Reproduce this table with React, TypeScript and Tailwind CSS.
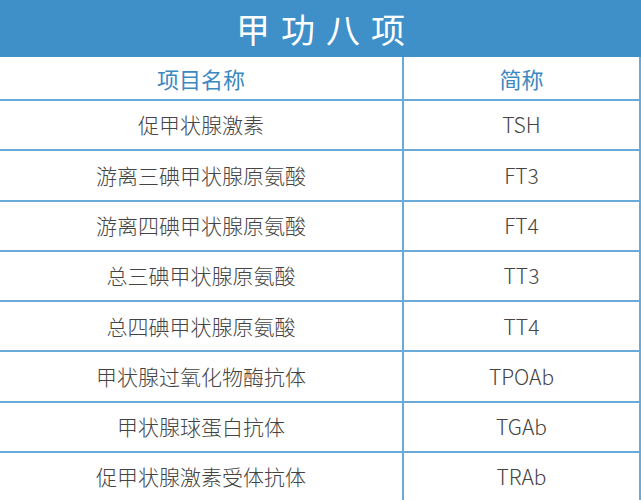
const rows: [string, string][] = [
  ["促甲状腺激素", "TSH"],
  ["游离三碘甲状腺原氨酸", "FT3"],
  ["游离四碘甲状腺原氨酸", "FT4"],
  ["总三碘甲状腺原氨酸", "TT3"],
  ["总四碘甲状腺原氨酸", "TT4"],
  ["甲状腺过氧化物酶抗体", "TPOAb"],
  ["甲状腺球蛋白抗体", "TGAb"],
  ["促甲状腺激素受体抗体", "TRAb"],
];

export default function App() {
  return (
    <div
      className="w-[641px] h-[500px] overflow-hidden bg-white"
      style={{ fontFamily: '"Noto Sans CJK SC", "Noto Sans", sans-serif' }}
    >
      <div className="h-[57px] bg-[#3f8fc9] flex items-center justify-center">
        <h1 className="text-[34px] leading-none font-normal text-white tracking-[11px] pl-[11px]">甲功八项</h1>
      </div>
      <div className="border-r-2 border-[#6aaad8]">
        <div className="grid grid-cols-[404px_1fr] h-[44px] border-b-2 border-[#6aaad8]">
          <div className="flex items-center justify-center border-r-2 border-[#6aaad8] text-[22px] font-normal text-[#3b88c2]">
            项目名称
          </div>
          <div className="flex items-center justify-center text-[22px] font-normal text-[#3b88c2]">
            简称
          </div>
        </div>
        {rows.map(([name, abbr]) => (
          <div
            key={abbr}
            className="grid grid-cols-[404px_1fr] h-[50.3px] border-b-2 border-[#6aaad8]"
          >
            <div className="flex items-center justify-center border-r-2 border-[#6aaad8] text-[21px] font-light text-[#444444]">
              {name}
            </div>
            <div className="flex items-center justify-center text-[21px] font-light text-[#444444]">
              {abbr}
            </div>
          </div>
        ))}
      </div>
    </div>
  );
}
